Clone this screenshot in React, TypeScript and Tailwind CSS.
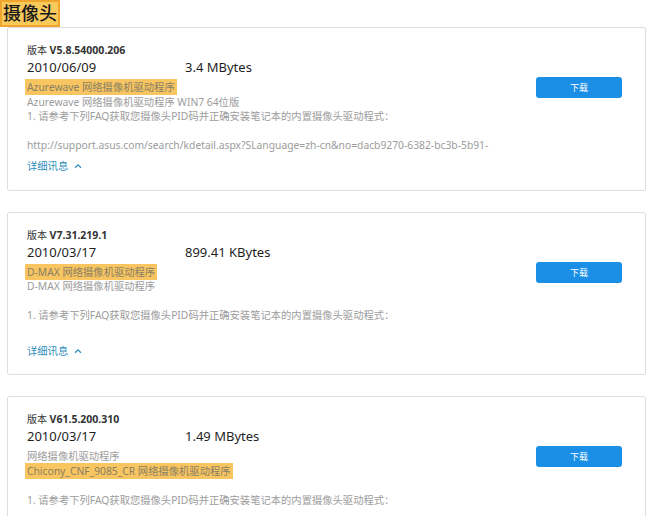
import React from 'react';

type Line = { text: string; mark?: boolean };

interface Driver {
  version: string;
  date: string;
  size: string;
  lines: Line[];
  details: boolean;
}

const drivers: Driver[] = [
  {
    version: 'V5.8.54000.206',
    date: '2010/06/09',
    size: '3.4 MBytes',
    lines: [
      { text: 'Azurewave 网络摄像机驱动程序', mark: true },
      { text: 'Azurewave 网络摄像机驱动程序 WIN7 64位版' },
      { text: '1. 请参考下列FAQ获取您摄像头PID码并正确安装笔记本的内置摄像头驱动程式：' },
      { text: '' },
      { text: 'http://support.asus.com/search/kdetail.aspx?SLanguage=zh-cn&no=dacb9270-6382-bc3b-5b91-' },
    ],
    details: true,
  },
  {
    version: 'V7.31.219.1',
    date: '2010/03/17',
    size: '899.41 KBytes',
    lines: [
      { text: 'D-MAX 网络摄像机驱动程序', mark: true },
      { text: 'D-MAX 网络摄像机驱动程序' },
      { text: '' },
      { text: '1. 请参考下列FAQ获取您摄像头PID码并正确安装笔记本的内置摄像头驱动程式：' },
      { text: '' },
    ],
    details: true,
  },
  {
    version: 'V61.5.200.310',
    date: '2010/03/17',
    size: '1.49 MBytes',
    lines: [
      { text: '网络摄像机驱动程序' },
      { text: 'Chicony_CNF_9085_CR 网络摄像机驱动程序', mark: true },
      { text: '' },
      { text: '1. 请参考下列FAQ获取您摄像头PID码并正确安装笔记本的内置摄像头驱动程式：' },
      { text: '' },
      { text: '' },
    ],
    details: false,
  },
];

const font = { fontFamily: '"Noto Sans", "Noto Sans CJK SC", sans-serif' };

function DriverCard({ d }: { d: Driver }) {
  return (
    <div className="ml-[7px] w-[639px] shrink-0 rounded-[2px] border border-[#dedede] bg-white flex pl-[19px] pr-[23px] pt-[15px] pb-[16px]">
      <div className="flex-1 min-w-0">
        <div className="text-[10px] leading-[14px] text-[#333]">
          版本 <span className="font-bold text-[10.5px]">{d.version}</span>
        </div>
        <div className="flex text-[13px] leading-[20px] text-[#1f1f1f]">
          <span className="w-[158px]">{d.date}</span>
          <span>{d.size}</span>
        </div>
        <div className="mt-[3px] text-[10.3px] leading-[14.5px] text-[#9c9c9c]">
          {d.lines.map((l, i) => (
            <div key={i} className="h-[14.5px] whitespace-nowrap">
              {l.mark ? <span className="bg-[#f8c560] text-[#8a7f66] px-[2px] -ml-[2px] py-[1px]">{l.text}</span> : l.text}
            </div>
          ))}
        </div>
        {d.details && (
          <div className="mt-[6.5px] flex items-center gap-[6px] text-[10.3px] leading-[14.5px] text-[#2f8dbb]">
            <span>详细讯息</span>
            <svg width="8" height="6" viewBox="0 0 8 6" fill="none">
              <polyline points="1,4.8 4,1.8 7,4.8" stroke="#2f8dbb" strokeWidth="1.3" />
            </svg>
          </div>
        )}
      </div>
      <div className="pt-[34px]">
        <button className="block w-[86px] h-[21px] rounded-[3px] bg-[#1b8fe6] text-white text-[9px] leading-none">
          下载
        </button>
      </div>
    </div>
  );
}

export default function App() {
  return (
    <div className="w-[650px] h-[516px] overflow-hidden bg-white flex flex-col" style={font}>
      <div className="self-start h-[28px] px-[1px] border-2 border-[#f0a52e] bg-[#f9c95c] text-[18px] leading-[23px] text-[#1a1a1a] font-medium">
        摄像头
      </div>
      <div className="flex flex-col gap-[21px]">
        {drivers.map((d) => (
          <DriverCard key={d.version} d={d} />
        ))}
      </div>
    </div>
  );
}
